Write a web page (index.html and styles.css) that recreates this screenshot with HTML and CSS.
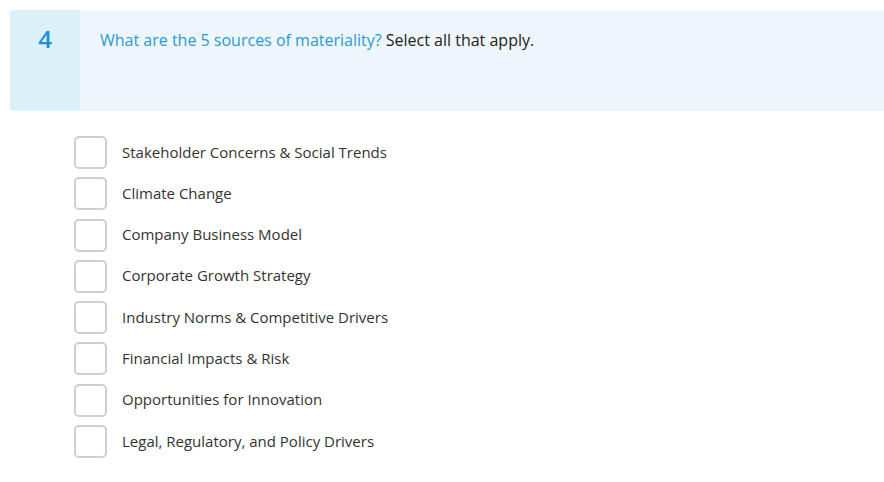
FILE: index.html
```html
<!DOCTYPE html>
<html lang="en">
<head>
    <meta charset="UTF-8">
    <meta name="viewport" content="width=device-width, initial-scale=1.0">
    <title>Question 4</title>
    <link rel="stylesheet" href="styles.css">
</head>
<body>
    <div class="question">
        <div class="question-number">4</div>
        <div class="question-text">
            <span class="prompt">What are the 5 sources of materiality?</span> Select all that apply.
        </div>
    </div>
    <ul class="answers">
        <li><label><input type="checkbox"><span class="box"></span><span class="label-text">Stakeholder Concerns &amp; Social Trends</span></label></li>
        <li><label><input type="checkbox"><span class="box"></span><span class="label-text">Climate Change</span></label></li>
        <li><label><input type="checkbox"><span class="box"></span><span class="label-text">Company Business Model</span></label></li>
        <li><label><input type="checkbox"><span class="box"></span><span class="label-text">Corporate Growth Strategy</span></label></li>
        <li><label><input type="checkbox"><span class="box"></span><span class="label-text">Industry Norms &amp; Competitive Drivers</span></label></li>
        <li><label><input type="checkbox"><span class="box"></span><span class="label-text">Financial Impacts &amp; Risk</span></label></li>
        <li><label><input type="checkbox"><span class="box"></span><span class="label-text">Opportunities for Innovation</span></label></li>
        <li><label><input type="checkbox"><span class="box"></span><span class="label-text">Legal, Regulatory, and Policy Drivers</span></label></li>
    </ul>
</body>
</html>
```

FILE: styles.css
```css
body {
    font-family: "Open Sans", Arial, sans-serif;
    margin: 0;
    padding: 10px 0 0 10px;
    background-color: #fff;
    color: #333;
}
.question {
    display: flex;
    height: 101px;
    background-color: #eef6fc;
    border-radius: 4px 0 0 4px;
    overflow: hidden;
}
.question-number {
    width: 70px;
    flex-shrink: 0;
    background-color: #dcf0fa;
    color: #1b8fd2;
    font-size: 24px;
    font-weight: 600;
    text-align: center;
    padding-top: 13px;
    line-height: 32px;
}
.question-text {
    padding: 18px 0 0 20px;
    font-size: 16px;
    line-height: 24px;
    color: #222;
}
.prompt {
    color: #2a9ad8;
}
.answers {
    list-style-type: none;
    margin: 0;
    padding: 25px 0 0 64px;
}
.answers li {
    height: 41.3px;
}
.answers label {
    display: flex;
    align-items: center;
    gap: 15px;
    font-size: 15px;
    color: #333;
    cursor: pointer;
}
.label-text {
    padding-bottom: 2px;
}
.answers input {
    display: none;
}
.box {
    width: 29px;
    height: 29px;
    border: 2px solid #cfcfcf;
    border-radius: 5px;
    background-color: #fff;
}
input:checked + .box {
    background-color: #1b8fd2;
    border-color: #1b8fd2;
}
```
